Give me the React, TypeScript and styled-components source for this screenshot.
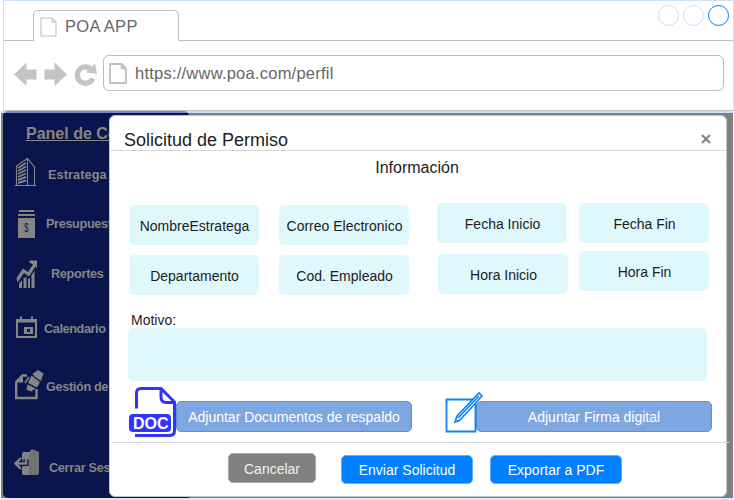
import React from "react";
import styled, { createGlobalStyle } from "styled-components";

const GlobalStyle = createGlobalStyle`
  *, *::before, *::after { box-sizing: border-box; }
  body { margin: 0; background: #fff; overflow: hidden; }
  button { font: inherit; margin: 0; padding: 0; }
`;

const Page = styled.div`
  width: 734px;
  height: 500px;
  display: flex;
  flex-direction: column;
  overflow: hidden;
  font-family: "Liberation Sans", Arial, sans-serif;
  white-space: nowrap;
`;

const Chrome = styled.header`
  height: 111px;
  margin-left: 3px;
  border: 1px solid #cce2fa;
  border-bottom: 1px solid #c0c0c0;
  display: flex;
  flex-direction: column;
`;

const TabStrip = styled.div`
  height: 40px;
  display: flex;
  justify-content: space-between;
  padding: 9px 0 0 29px;
  box-shadow: inset 0 -1px #c0c0c0;
`;

const Tab = styled.div`
  width: 146px;
  height: 31px;
  display: flex;
  gap: 8px;
  padding: 6px 0 0 6px;
  border: 1px solid #bcbcbc;
  border-bottom: 0;
  border-radius: 5px 5px 0 0;
  background: #fff;
  color: #666;
  font-size: 16.5px;
  letter-spacing: 0.3px;
  line-height: 18px;
`;

const WindowButtons = styled.div`
  display: flex;
  gap: 4px;
  margin: -5px 4px 0 0;
`;

const Circle = styled.span<{ $active?: boolean }>`
  width: 21px;
  height: 21px;
  border: 1px solid ${(p) => (p.$active ? "#0080f0" : "#c4defa")};
  border-radius: 50%;
`;

const Toolbar = styled.div`
  flex: 1;
  display: flex;
  align-items: flex-start;
  padding: 14px 9px 0 10px;
`;

const NavIcons = styled.svg`
  display: block;
  margin: 6px 5px 0 0;
`;

const AddressBar = styled.div`
  flex: 1;
  height: 36px;
  display: flex;
  align-items: center;
  gap: 8px;
  padding: 0 0 0 5px;
  border: 1px solid #bcbcbc;
  border-radius: 6px;
  color: #666;
  font-size: 16.5px;
  letter-spacing: 0.23px;
`;

const Body = styled.main`
  position: relative;
  height: 389px;
  margin: 0 1px 0 1px;
  background: linear-gradient(
    #cce0f8 2px,
    #7b827f 2px,
    #7b827f 49px,
    #6c7a8c 49px,
    #6c7a8c 50px,
    #808080 50px,
    #808080 387px,
    #dbe7f4 387px
  );
  display: flex;
`;

const Sidebar = styled.nav`
  width: 186px;
  height: 387px;
  margin-left: 2px;
  padding-left: 11px;
  border-radius: 5px 5px 0 5px;
  background: linear-gradient(#808bca 2px, #0b154d 2px);
  color: #858585;
  font-weight: 700;
`;

const PanelTitle = styled.div`
  height: 46px;
  padding: 14px 0 0 12px;
  font-size: 16px;
  line-height: 18px;
  text-decoration: underline;
`;

const MenuItem = styled.div<{ $height: number; $gap: number }>`
  height: ${(p) => p.$height}px;
  display: flex;
  align-items: flex-start;
  gap: ${(p) => p.$gap}px;
  line-height: 14px;
`;

const MenuIcon = styled.svg`
  display: block;
  flex: none;
`;

const MenuText = styled.span<{ $top: number; $spacing?: number }>`
  padding-top: ${(p) => p.$top}px;
  font-size: 12.7px;
  letter-spacing: ${(p) => p.$spacing ?? 0}px;
`;

const Modal = styled.section`
  position: absolute;
  left: 108px;
  top: 4px;
  width: 618px;
  height: 382px;
  border: 1px solid #c4c4c4;
  border-radius: 6px;
  background: #fff;
  color: #1c1c1c;
`;

const ModalHeader = styled.div`
  height: 35px;
  display: flex;
  justify-content: space-between;
  padding: 14px 15px 0 14px;
  border-bottom: 1px solid #d6d6d6;
  font-size: 18px;
  line-height: 20px;
`;

const CloseIcon = styled.svg`
  margin-top: 4px;
`;

const SectionTitle = styled.div`
  height: 52px;
  padding: 8px 2px 0 0;
  text-align: center;
  font-size: 16px;
  line-height: 18px;
`;

const Fields = styled.div`
  height: 108px;
  display: flex;
  padding: 0.4px 0 0 19.4px;
`;

const FieldColumn = styled.div<{ $top: number; $left: number; $gap: number }>`
  display: flex;
  flex-direction: column;
  gap: ${(p) => p.$gap}px;
  margin: ${(p) => p.$top}px 0 0 ${(p) => p.$left}px;
`;

const Field = styled.div<{ $shift?: number }>`
  width: 130px;
  height: 40px;
  display: flex;
  align-items: center;
  justify-content: center;
  padding: 1.2px 0 0 0.3px;
  margin-left: ${(p) => p.$shift ?? 0}px;
  margin-right: ${(p) => -(p.$shift ?? 0)}px;
  border-radius: 5px;
  background: #dff8fe;
  font-size: 14px;
`;

const ReasonLabel = styled.div`
  height: 17px;
  padding: 1px 0 0 21px;
  font-size: 14px;
  line-height: 16px;
`;

const ReasonBox = styled.div`
  width: 579px;
  height: 53px;
  margin-left: 18px;
  border-radius: 5px;
  background: #dff8fe;
`;

const Attachments = styled.div`
  height: 61px;
  display: flex;
  align-items: flex-start;
  padding-left: 19px;
`;

const AttachIcon = styled.svg<{ $left?: number }>`
  position: relative;
  z-index: 1;
  flex: none;
  margin: 5px 0 0 ${(p) => p.$left ?? 0}px;
`;

const AttachButton = styled.button<{ $overlap: number }>`
  width: 236px;
  height: 31px;
  margin: 20px 0 0 ${(p) => -p.$overlap}px;
  border: 1px solid #6c8ebf;
  border-radius: 5px;
  background: #7ea6e0;
  color: #fff;
  font-size: 14px;
`;

const ModalFooter = styled.footer`
  height: 53px;
  display: flex;
  align-items: flex-start;
  margin: 0 -3px 0 2px;
  padding-left: 116px;
  border-top: 1px solid #d6d6d6;
`;

const Action = styled.button<{ $width: number; $top: number; $left?: number; $muted?: boolean }>`
  width: ${(p) => p.$width}px;
  height: ${(p) => (p.$muted ? 30 : 29)}px;
  margin: ${(p) => p.$top}px 0 0 ${(p) => p.$left ?? 0}px;
  padding-top: ${(p) => (p.$muted ? 2 : 1)}px;
  border: 1px solid ${(p) => (p.$muted ? "#a8a8a8" : "#5cb0ff")};
  border-radius: 5px;
  background: ${(p) => (p.$muted ? "#808080" : "#0080ff")};
  color: ${(p) => (p.$muted ? "#f0f0f0" : "#fff")};
  font-size: 14px;
`;

const PageIcon = ({ width, height, stroke }: { width: number; height: number; stroke: number }) => (
  <svg width={width} height={height} viewBox="0 0 17 20" preserveAspectRatio="none" fill="none" stroke="#c2c2c2" strokeWidth={stroke}>
    <path d="M1 1H12L16 5V19H1ZM12 1V5H16" />
  </svg>
);

export default function App() {
  return (
    <Page>
      <GlobalStyle />
      <Chrome>
        <TabStrip>
          <Tab>
            <PageIcon width={17} height={20} stroke={1.1} />
            POA APP
          </Tab>
          <WindowButtons>
            <Circle />
            <Circle />
            <Circle $active />
          </WindowButtons>
        </TabStrip>
        <Toolbar>
          <NavIcons width="84" height="26" viewBox="0 0 84 26" fill="#c4c4c4">
            <path d="M0 13.500L12.500 1.500V8.500H22.500V18.500H12.500V25Z" />
            <path d="M53 13.500L40.500 1.500V8.500H30.500V18.500H40.500V25Z" />
            <path d="M79 17.500A8.200 8.200 0 1 1 76.500 7.500" fill="none" stroke="#c4c4c4" strokeWidth="5.200" />
            <path d="M81 2.500L83 12.800L71.500 11.500Z" />
          </NavIcons>
          <AddressBar>
            <PageIcon width={18} height={21} stroke={1.8} />
            https://www.poa.com/perfil
          </AddressBar>
        </Toolbar>
      </Chrome>
      <Body>
        <Sidebar>
          <PanelTitle>Panel de Co</PanelTitle>
          <MenuItem $height={51} $gap={8}>
            <MenuIcon width="26" height="30" viewBox="0 0 26 30" stroke="#858585" fill="none">
              <path d="M2.500 28V9L13.500 1.500L20.500 10V28M13.500 1.500V28M1 28.500H22" strokeWidth="1.100" />
              <path d="M4 11L12 6M4 14L12 9.500M4 17L12 13M4 20L12 16.500M4 23L12 20M4 26L12 23.500" strokeWidth="1.900" />
            </MenuIcon>
            <MenuText $top={11} $spacing={0.1}>Estratega</MenuText>
          </MenuItem>
          <MenuItem $height={51} $gap={6}>
            <MenuIcon width="26" height="31" viewBox="0 0 26 31" fill="#858585">
              <path d="M5 2H20V4H5ZM4 6H21V8H4ZM4 10H21V30H4Z" />
              <text transform="translate(12.500 23.500) scale(0.650 1)" textAnchor="middle" fontSize="12" fontWeight="400" fill="#0b154d">
                $
              </text>
            </MenuIcon>
            <MenuText $top={9} $spacing={-0.35}>Presupuest</MenuText>
          </MenuItem>
          <MenuItem $height={56} $gap={11}>
            <MenuIcon width="26" height="31" viewBox="0 0 26 31" fill="#858585">
              <path d="M2.500 19L9 9.500L14 13L19 5.500L15.500 3.500V1.500H23V9.500L21.500 7.500L15 17.500L10 14L3.500 23.500Z" />
              <path d="M5 24.500L8 21V29H5ZM9.500 19L12.500 18V29H9.500ZM14 20L16 19V29H14ZM17.500 16L20.500 12V29H17.500Z" />
            </MenuIcon>
            <MenuText $top={8} $spacing={-0.3}>Reportes</MenuText>
          </MenuItem>
          <MenuItem $height={54} $gap={4}>
            <MenuIcon width="26" height="27" viewBox="0 0 26 27">
              <path d="M3 4V22H22V4" fill="none" stroke="#858585" strokeWidth="2" />
              <path d="M2 4H6V1.500H8V4H17V1.500H19V4H23V7.500H2ZM10 12H19V19H10ZM13 14V17H16V14Z" fill="#858585" fillRule="evenodd" />
            </MenuIcon>
            <MenuText $top={7} $spacing={-0.4}>Calendario</MenuText>
          </MenuItem>
          <MenuItem $height={80} $gap={2}>
            <MenuIcon width="30" height="32" viewBox="0 0 30 32" fill="#858585">
              <path d="M13 6.500H8.500L2.200 13V29H22.500V20" fill="none" stroke="#858585" strokeWidth="2.400" />
              <path d="M2 13.500L9 6V13.500Z" />
              <path d="M18.500 5L24 1L29.500 4.500L27 12L20.500 7.500Z" />
              <path d="M17.500 6.500L26 13L23 18.500L14 14Z" />
              <path d="M13.500 15.500L21.500 19.500L17 22.500L12.500 20.500Z" />
              <path d="M15 8L11 14" stroke="#858585" strokeWidth="1.500" />
            </MenuIcon>
            <MenuText $top={11} $spacing={-0.35}>Gestión de</MenuText>
          </MenuItem>
          <MenuItem $height={40} $gap={6}>
            <MenuIcon width="29" height="29" viewBox="0 0 29 29" fill="#858585">
              <path d="M10 3H16V26H10Q8 26 8 24V5Q8 3 10 3Z" />
              <path d="M7 9L1.500 14.500L7 20M2 14.500H12V10" fill="none" stroke="#0b154d" strokeWidth="5" />
              <path d="M7 9L1.500 14.500L7 20M2 14.500H12V10" fill="none" stroke="#858585" strokeWidth="2.300" />
              <path d="M15 3L18 0L25 3V24L23.500 26H15Z" fill="#737373" />
            </MenuIcon>
            <MenuText $top={12} $spacing={-0.3}>Cerrar Ses</MenuText>
          </MenuItem>
        </Sidebar>
        <Modal>
          <ModalHeader>
            Solicitud de Permiso
            <CloseIcon width="10" height="10" viewBox="0 0 10 10" stroke="#848484" strokeWidth="2.200">
              <path d="M1 1L9 9M9 1L1 9" />
            </CloseIcon>
          </ModalHeader>
          <SectionTitle>Información</SectionTitle>
          <Fields>
            <FieldColumn $top={2} $left={0} $gap={10}>
              <Field>NombreEstratega</Field>
              <Field>Departamento</Field>
            </FieldColumn>
            <FieldColumn $top={2} $left={20} $gap={10}>
              <Field>Correo Electronico</Field>
              <Field>Cod. Empleado</Field>
            </FieldColumn>
            <FieldColumn $top={0} $left={28} $gap={11}>
              <Field>Fecha Inicio</Field>
              <Field $shift={1}>Hora Inicio</Field>
            </FieldColumn>
            <FieldColumn $top={0} $left={12} $gap={8}>
              <Field>Fecha Fin</Field>
              <Field>Hora Fin</Field>
            </FieldColumn>
          </Fields>
          <ReasonLabel>Motivo:</ReasonLabel>
          <ReasonBox />
          <Attachments>
            <AttachIcon width="48" height="52" viewBox="0 0 48 52" fill="none" stroke="#3333ff" strokeWidth="3">
              <path d="M7.500 22.500V7Q7.500 2.500 12 2.500H32L45.500 16V45Q45.500 49.500 40 49.500H6M32 2.500V11Q32 16.500 37 16.500H45" />
              <rect x="0" y="28" width="42" height="18" rx="4" fill="#3333ff" stroke="none" />
              <text x="21.700" y="43" textAnchor="middle" fontSize="16" fontWeight="700" fill="#fff" stroke="none">DOC</text>
            </AttachIcon>
            <AttachButton $overlap={1}>Adjuntar Documentos de respaldo</AttachButton>
            <AttachIcon $left={33} width="38" height="52" viewBox="0 0 38 52" fill="none" stroke="#0a84f5" strokeWidth="1.800">
              <path d="M1.500 13.500H30.500V45.500H1.500Z" />
              <path d="M10 36L12 30L34 7L37 10L15 34ZM13 32L34 10" fill="#fff" strokeWidth="1.600" />
            </AttachIcon>
            <AttachButton $overlap={7}>Adjuntar Firma digital</AttachButton>
          </Attachments>
          <ModalFooter>
            <Action $muted $width={88} $top={10}>Cancelar</Action>
            <Action $width={132} $top={12} $left={25}>Enviar Solicitud</Action>
            <Action $width={132} $top={12} $left={17}>Exportar a PDF</Action>
          </ModalFooter>
        </Modal>
      </Body>
    </Page>
  );
}
